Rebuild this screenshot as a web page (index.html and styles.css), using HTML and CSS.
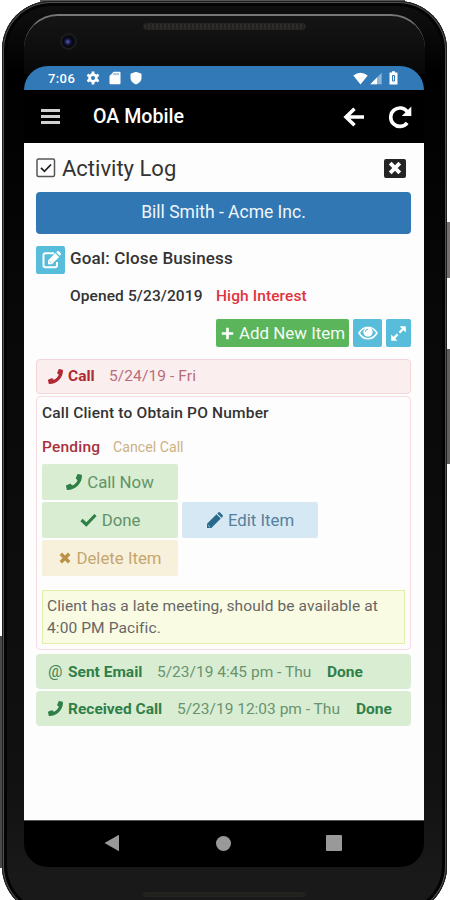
FILE: index.html
```html
<!DOCTYPE html>
<html lang="en">
<head>
  <meta charset="UTF-8">
  <title>OA Mobile</title>
  <link rel="stylesheet" href="styles.css">
</head>
<body>
  <svg class="sprites">
    <symbol id="phone" viewBox="0 0 512 512"><path d="M493 25l-104-24c-11-3-23 3-27 14l-48 112c-4 10-2 21 7 28l48 42c-27 74-98 145-172 172l-42-48c-7-8-18-11-28-7L15 362c-11 5-17 16-14 27l24 104c2 11 12 19 23 19 256 0 464-208 464-464 0-11-8-21-19-23z"/></symbol>
    <symbol id="times" viewBox="0 0 14 14"><path d="M2.8 2.8l8.4 8.4M11.2 2.8l-8.4 8.4" fill="none" stroke="currentColor" stroke-width="3.4"/></symbol>
  </svg>

  <div class="stage">
    <div class="top-edge"></div>
    <div class="side side-left"></div>
    <div class="side side-power"></div>
    <div class="side side-volume"></div>

    <div class="phone">
      <div class="glass"></div>
      <div class="camera"></div>
      <div class="speaker"></div>

      <div class="screen">
        <div class="status">
          <span class="time">7:06</span>
          <svg width="14" height="14" viewBox="0 0 14 14"><g fill="none" stroke="#fff"><circle cx="7" cy="7" r="3.4" stroke-width="2.7"/><path d="M7 .6v2.5M7 10.9v2.5M1.4 3.8l2.2 1.3M10.4 8.9l2.2 1.3M1.4 10.2l2.2-1.3M10.4 5.1l2.2-1.3" stroke-width="2.8"/></g></svg>
          <svg width="12" height="14" viewBox="0 0 12 14"><path fill="#fff" d="M4.6.8H10.5q1 0 1 1v10.5q0 1-1 1h-9q-1 0-1-1V5z"/><path stroke="#3279b7" stroke-width=".8" d="M5 2v2.2M7 2v2.2M9 2v2.2"/></svg>
          <svg width="12" height="14" viewBox="0 0 12 14"><path fill="#fff" d="M6 .8l5.5 2V7q0 4-5.5 6.500Q.5 11 .5 7V2.800z"/></svg>
          <div class="status-right">
            <svg width="15" height="13" viewBox="0 0 15 13"><path fill="#fff" d="M.3 3.5Q7.5-2 14.7 3.5L7.5 12.5z"/></svg>
            <svg width="12" height="13" viewBox="0 0 12 13"><path fill="#8fb6d8" d="M11.7.8v11.5H.3z"/><path fill="#fff" d="M7 5.5v6.8H.3z"/></svg>
            <svg class="battery" width="9" height="14" viewBox="0 0 9 14"><path fill="#fff" d="M3 .3h3v1.3h2.500v12H.5v-12H3z"/><path fill="none" stroke="#3279b7" d="M3.500 4.500h2v5.500h-2z"/></svg>
          </div>
        </div>

        <header class="appbar">
          <div class="burger"><i></i><i></i><i></i></div>
          <div class="title">OA Mobile</div>
          <svg class="back" width="22" height="22" viewBox="0 0 22 22"><path d="M11.5 2.8L3 11l8.500 8.200M3 11h18" fill="none" stroke="#fff" stroke-width="3.600"/></svg>
          <svg width="26" height="26" viewBox="0 0 26 26"><path d="M20.200 18.800A9.200 9.200 0 1 1 20.500 8" fill="none" stroke="#fff" stroke-width="3.600"/><path fill="#fff" d="M24.300 2.500V12H14.800z"/></svg>
        </header>

        <main class="content">
          <div class="log-head">
            <svg width="20" height="20" viewBox="0 0 20 20"><rect x="1" y="1" width="17.500" height="17.500" rx="1.500" fill="none" stroke="#555" stroke-width="1.500"/><path d="M5 9.800l3.500 3.500L15 6.500" fill="none" stroke="#222" stroke-width="1.800"/></svg>
            <h1>Activity Log</h1>
            <div class="close"><svg width="16" height="16"><use href="#times"/></svg></div>
          </div>

          <div class="client">Bill Smith - Acme Inc.</div>

          <div class="goal">
            <div class="square edit">
              <svg width="20" height="20" viewBox="0 0 20 20"><path d="M13 3.300H4.500q-2 0-2 2v10q0 2 2 2h9.500q2 0 2-2V12" fill="none" stroke="#fff" stroke-width="2"/><path fill="#fff" d="M7 14.200v-3.800l7.300-7.300 3.800 3.800-7.300 7.300zM15.200 2.200l1-1q.8-.8 1.600 0l2 2q.8.800 0 1.600l-1 1z"/><path d="M8.200 11l2 2" stroke="#5bc0de" stroke-width=".7"/></svg>
            </div>
            <div class="goal-name">Goal: Close Business</div>
          </div>
          <div class="opened"><span class="opened-date">Opened 5/23/2019</span><span class="interest">High Interest</span></div>

          <div class="tools">
            <div class="add"><svg width="13" height="13" viewBox="0 0 13 13"><path d="M6.500.8v11.400M.8 6.500h11.400" stroke="#fff" stroke-width="2.600"/></svg><span>Add New Item</span></div>
            <div class="square">
              <svg width="20" height="16" viewBox="0 0 20 16"><path d="M1 8q3.500-5.800 9-5.800T19 8q-3.500 5.800-9 5.800T1 8z" fill="none" stroke="#fff" stroke-width="1.600"/><circle cx="10" cy="7" r="4.700" fill="#fff"/><path d="M7.300 7A2.700 2.700 0 0 1 10 4.300" fill="none" stroke="#5bc0de"/></svg>
            </div>
            <div class="square expand">
              <svg width="17" height="17" viewBox="0 0 17 17"><path d="M4 13l3.600-3.600M9.400 7.600L13 4" stroke="#fff" stroke-width="2.300"/><path fill="#fff" d="M9.500 1.200h6.300v6.300zM1.200 9.500v6.300h6.300z"/></svg>
            </div>
          </div>

          <div class="row row-call"><svg width="15" height="15"><use href="#phone"/></svg><b class="w-call">Call</b><span class="d-call">5/24/19 - Fri</span></div>

          <div class="detail">
            <div class="subject">Call Client to Obtain PO Number</div>
            <div class="pending"><b>Pending</b><span>Cancel Call</span></div>
            <div class="actions">
              <div class="action green"><svg width="16" height="16"><use href="#phone"/></svg><span>Call Now</span></div>
              <div class="action green"><svg width="17" height="14" viewBox="0 0 17 14"><path d="M1.500 7l4.800 4.500L15.500 2" fill="none" stroke="currentColor" stroke-width="3.200"/></svg><span>Done</span></div>
              <div class="action blue"><svg width="17" height="17" viewBox="0 0 17 17"><path fill="currentColor" d="M1 16v-4.300L10.500 2.200l4.300 4.300L5.300 16zM11.300 1.400l.9-.9q.9-.8 1.800 0l2.500 2.500q.8.900 0 1.800l-.9.900z"/><path d="M1.800 13l2.200 2.200" stroke="#d5e8f3" stroke-width=".7"/></svg><span>Edit Item</span></div>
              <div class="action tan"><svg width="14" height="16"><use href="#times"/></svg><span>Delete Item</span></div>
            </div>
            <div class="note">Client has a late meeting, should be available at<br>4:00 PM Pacific.</div>
          </div>

          <div class="row row-done"><span class="at">@</span><b class="w-sent">Sent Email</b><span class="d-sent">5/23/19 4:45 pm - Thu</span><b>Done</b></div>
          <div class="row row-done"><svg width="15" height="15"><use href="#phone"/></svg><b class="w-recv">Received Call</b><span class="d-recv">5/23/19 12:03 pm - Thu</span><b>Done</b></div>
        </main>

        <nav class="navbar">
          <svg width="16" height="18" viewBox="0 0 16 18"><path fill="#999" d="M.5 9L15 .7v16.600z"/></svg>
          <i class="home"></i>
          <i class="recent"></i>
        </nav>
      </div>
      <div class="speaker speaker-bottom"></div>
    </div>
  </div>
</body>
</html>
```
FILE: styles.css
```css
* {
  margin: 0;
  padding: 0;
  box-sizing: border-box;
}

body {
  width: 450px;
  height: 900px;
  overflow: hidden;
  background: #fff;
  font-family: Roboto, "Liberation Sans", sans-serif;
  color: #333;
}

svg {
  display: block;
  flex: none;
}

.sprites {
  position: absolute;
  width: 0;
  height: 0;
}

use {
  fill: currentColor;
}

/* phone body */
.stage {
  position: relative;
  height: 900px;
  overflow: hidden;
  padding: 1px 6px 0 2px;
}

.top-edge {
  position: absolute;
  left: 40px;
  top: 0;
  width: 365px;
  height: 6px;
  background: #555;
}

.side {
  position: absolute;
  background: #625f5f;
}

.side-left {
  left: 0;
  top: 636px;
  width: 6px;
  height: 232px;
  background: #484848;
}

.side-power {
  left: 444px;
  top: 222px;
  width: 6px;
  height: 56px;
  background: #777172;
}

.side-volume {
  left: 444px;
  top: 349px;
  width: 6px;
  height: 115px;
}

.phone {
  position: relative;
  width: 445px;
  height: 914px;
  padding: 65px 23px 0 22px;
  border-radius: 49px;
  background: linear-gradient(#101010, #000 8%, #080808 35%, #111 85%, #191919 96%);
  box-shadow: inset 0 0 0 1px #1d1d1d, inset 0 0 0 2px #505050, inset 0 0 0 5px #030303;
}

.glass {
  position: absolute;
  left: 22px;
  top: 13px;
  width: 401px;
  height: 60px;
  border-top: 2px solid #777;
  border-radius: 34px 34px 0 0;
  background: linear-gradient(#151515, #080808);
}

.camera {
  position: absolute;
  left: 58px;
  top: 32px;
  width: 17px;
  height: 17px;
  border-radius: 50%;
  border: 2px solid #1c1c1c;
  background: radial-gradient(circle at 45% 52%, #6268c9 0, #252866 20%, #090914 42%);
}

.speaker {
  position: absolute;
  left: 141px;
  top: 22px;
  width: 163px;
  height: 7px;
  border-radius: 4px;
  border: 1px solid #242422;
  background: repeating-linear-gradient(90deg, #2e2c2a 0 2px, #222120 2px 4px);
}

.speaker-bottom {
  top: 891px;
  height: 5px;
  background: #22211e;
}

.screen {
  position: relative;
  display: flex;
  flex-direction: column;
  height: 801px;
  border-radius: 24px;
  overflow: hidden;
  background: #000;
}

.status {
  display: flex;
  align-items: center;
  height: 24px;
  padding: 0 26px 0 24px;
  background: #3279b7;
  color: #fff;
}

.time {
  width: 38px;
  font-size: 13px;
  font-weight: 500;
  letter-spacing: .4px;
}

.status svg + svg {
  margin-left: 9px;
}

.status-right {
  display: flex;
  align-items: center;
  margin-left: auto;
}

.status-right svg + svg {
  margin-left: 2px;
}

.status-right .battery {
  margin-left: 7px;
}

.appbar {
  display: flex;
  align-items: center;
  height: 53px;
  padding: 0 11px 0 17px;
  color: #fff;
}

.burger {
  display: flex;
  flex-direction: column;
  gap: 3px;
  width: 52px;
}

.burger i {
  width: 19px;
  height: 3px;
  background: #d0d2d0;
}

.title {
  font-size: 19.6px;
  font-weight: 500;
}

.back {
  margin: 0 22px 0 auto;
}

.content {
  height: 677px;
  padding: 11px 13px 0 12px;
  background: #fdfdfd;
}

.log-head {
  display: flex;
  align-items: center;
  height: 28px;
}

.log-head h1 {
  margin-left: 6px;
  font-size: 22px;
  font-weight: 400;
}

.close {
  display: flex;
  align-items: center;
  justify-content: center;
  width: 22px;
  height: 19px;
  margin: 0 5px 0 auto;
  border-radius: 2px;
  background: #242424;
  color: #fff;
}

.client {
  height: 42px;
  margin-top: 10px;
  border-radius: 4px;
  background: #3177b4;
  color: #f0f6fb;
  font-size: 17.5px;
  line-height: 41px;
  text-align: center;
}

.goal {
  display: flex;
  margin-top: 12px;
  font-size: 17px;
  font-weight: 500;
  letter-spacing: .15px;
}

.goal-name {
  margin-left: 5px;
  line-height: 25px;
}

.square {
  display: flex;
  align-items: center;
  justify-content: center;
  width: 29px;
  height: 28px;
  border-radius: 2px;
  background: #58bddb;
}

.opened {
  display: flex;
  margin-top: 12px;
  padding-left: 34px;
  font-size: 15.5px;
  font-weight: 500;
  line-height: 20px;
  letter-spacing: .1px;
}

.opened-date {
  width: 146px;
}

.interest {
  color: #e0333c;
}

.tools {
  display: flex;
  justify-content: flex-end;
  gap: 4px;
  margin-top: 13px;
}

.add {
  display: flex;
  align-items: center;
  gap: 5px;
  width: 133px;
  height: 28px;
  padding-left: 5px;
  border-radius: 2px;
  background: #5bb55b;
  color: #f3fbf3;
  font-size: 16.9px;
}

.tools .expand {
  width: 25px;
}

.row {
  display: flex;
  align-items: center;
  height: 35px;
  margin-top: 2px;
  padding-left: 12px;
  border-radius: 4px;
  font-size: 15.5px;
}

.row b {
  font-weight: 700;
}

.row-call {
  margin-top: 12px;
  border: 1px solid #f2d6da;
  padding: 0 0 1px 11px;
  background: #faeeee;
  color: #b02a35;
}

.row-call span {
  color: #bb6c7b;
  letter-spacing: .1px;
}

.row b:first-of-type {
  margin-left: 5px;
}

.w-call {
  width: 41px;
}

.detail {
  height: 254px;
  margin-top: 2px;
  padding: 6px 5px 0;
  border: 1px solid #f6dce1;
  border-radius: 4px;
}

.subject {
  font-size: 15.5px;
  font-weight: 500;
  line-height: 20px;
  letter-spacing: .18px;
}

.pending {
  display: flex;
  margin-top: 14px;
  line-height: 20px;
}

.pending b {
  width: 71px;
  color: #a8323c;
  font-size: 15.5px;
  font-weight: 500;
  letter-spacing: .2px;
}

.pending span {
  color: #cdb184;
  font-size: 14.2px;
}

.actions {
  display: grid;
  grid-template-columns: 136px 136px;
  gap: 2px 4px;
  margin-top: 7px;
}

.action {
  display: flex;
  align-items: center;
  justify-content: center;
  gap: 5px;
  height: 36px;
  border-radius: 2px;
  font-size: 16.8px;
}

.action:first-child {
  grid-column: 1 / 3;
  width: 136px;
}

.green {
  background: #d8edd1;
  color: #2f8048;
}

.green span {
  color: #62936a;
}

.blue {
  background: #d5e8f3;
  color: #286a8c;
}

.blue span {
  color: #587f9d;
}

.tan {
  gap: 4px;
  background: #f7f1dc;
  color: #bd9145;
}

.tan span {
  color: #c6a66f;
}

.note {
  height: 54px;
  margin-top: 14px;
  padding: 4px;
  border: 1px solid #e6edab;
  background: #fafbe3;
  color: #666;
  font-size: 15.5px;
  line-height: 22px;
  letter-spacing: .1px;
  white-space: nowrap;
}

.row-done {
  background: #d9edd3;
  color: #2f8048;
}

.detail + .row-done {
  margin-top: 4px;
}

.row-done span {
  color: #68936d;
}

.row-done .at {
  width: 15px;
  color: #438556;
  font-size: 16px;
}

.w-sent {
  width: 89px;
}

.w-recv {
  width: 109px;
}

.d-sent {
  width: 170px;
}

.d-recv {
  width: 179px;
}

.navbar {
  display: flex;
  align-items: center;
  justify-content: space-between;
  height: 47px;
  padding: 0 82px 2px 80px;
  border-top: 1px solid #555;
}

.home {
  width: 15px;
  height: 15px;
  border-radius: 50%;
  background: #999;
}

.recent {
  width: 16px;
  height: 16px;
  border-radius: 1px;
  background: #999;
}
```
